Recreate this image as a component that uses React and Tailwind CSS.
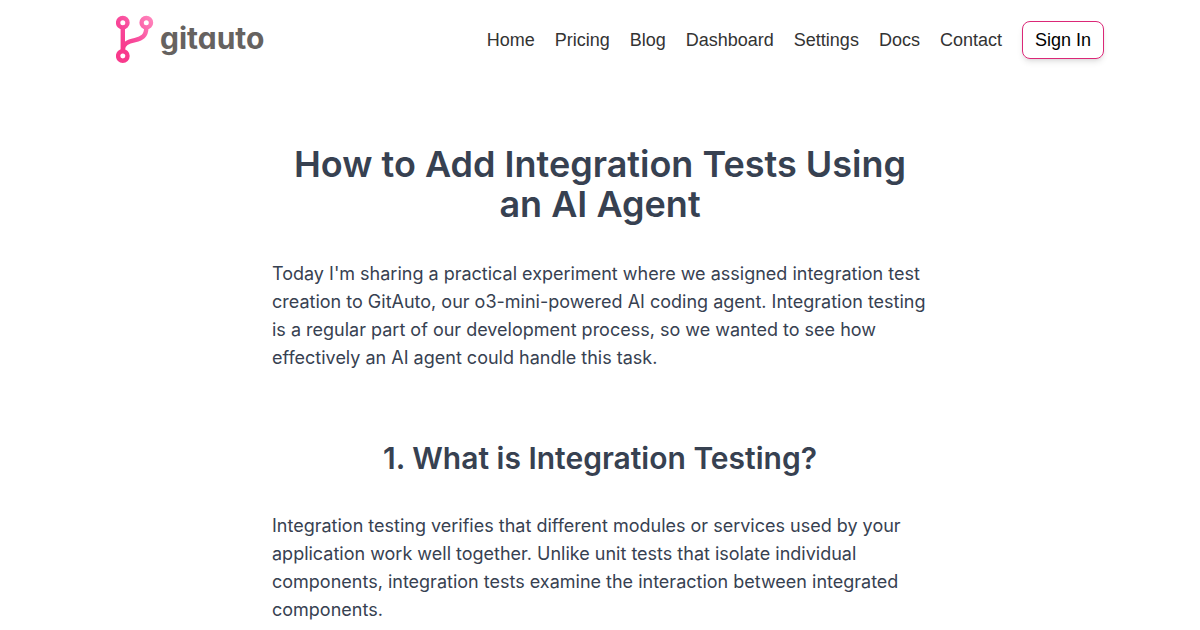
const links = ["Home", "Pricing", "Blog", "Dashboard", "Settings", "Docs", "Contact"];

function Logo() {
  return (
    <a href="#" aria-label="gitauto" className="flex items-center gap-1 pl-5">
      <svg viewBox="0 0 40 50" className="h-[50px] w-10" fill="none" strokeWidth="4.4" aria-hidden="true">
        <defs>
          <linearGradient id="pink" x1="4" y1="30" x2="36" y2="6" gradientUnits="userSpaceOnUse">
            <stop stopColor="#f83a8c" />
            <stop offset="0.35" stopColor="#f8489a" />
            <stop offset="1" stopColor="#ff80ba" />
          </linearGradient>
        </defs>
        <g stroke="url(#pink)">
          <circle cx="6.8" cy="7.7" r="4.7" />
          <circle cx="30.3" cy="7.7" r="4.7" />
          <circle cx="6.8" cy="41" r="4.7" />
          <path d="M6.8 12.5L6.81 36.5M30.3 12.5C30.3 21 26 23.5 19 25.2C12 26.8 7 28.5 6.8 35" />
        </g>
      </svg>
      <span className="pb-1 font-['Inter',sans-serif] text-3xl font-bold text-[#666260] [font-feature-settings:'cv11']">gitauto</span>
    </a>
  );
}

export default function App() {
  return (
    <div className="min-h-screen bg-white">
      <header className="mx-auto flex h-20 max-w-5xl items-center justify-between px-2 font-['Liberation_Sans',sans-serif] text-lg">
        <Logo />
        <nav className="flex items-center gap-5 text-[#333333]">
          {links.map((label) => (
            <a key={label} href="#">{label}</a>
          ))}
          <button className="rounded-lg border border-[#db2777] px-3 py-1 text-black shadow-md">Sign In</button>
        </nav>
      </header>
      <main className="mx-auto max-w-[656px] pt-16 font-['Inter',sans-serif] text-lg leading-7 text-[#374151]">
        <h1 className="text-center text-4xl leading-10 font-semibold">How to Add Integration Tests Using an AI Agent</h1>
        <p className="mt-9">Today I'm sharing a practical experiment where we assigned integration test creation to GitAuto, our o3-mini-powered AI coding agent. Integration testing is a regular part of our development process, so we wanted to see how effectively an AI agent could handle this task.</p>
        <h2 className="mt-17 text-center text-3xl font-semibold">1. What is Integration Testing?</h2>
        <p className="mt-9">Integration testing verifies that different modules or services used by your application work well together. Unlike unit tests that isolate individual components, integration tests examine the interaction between integrated components.</p>
      </main>
    </div>
  );
}
